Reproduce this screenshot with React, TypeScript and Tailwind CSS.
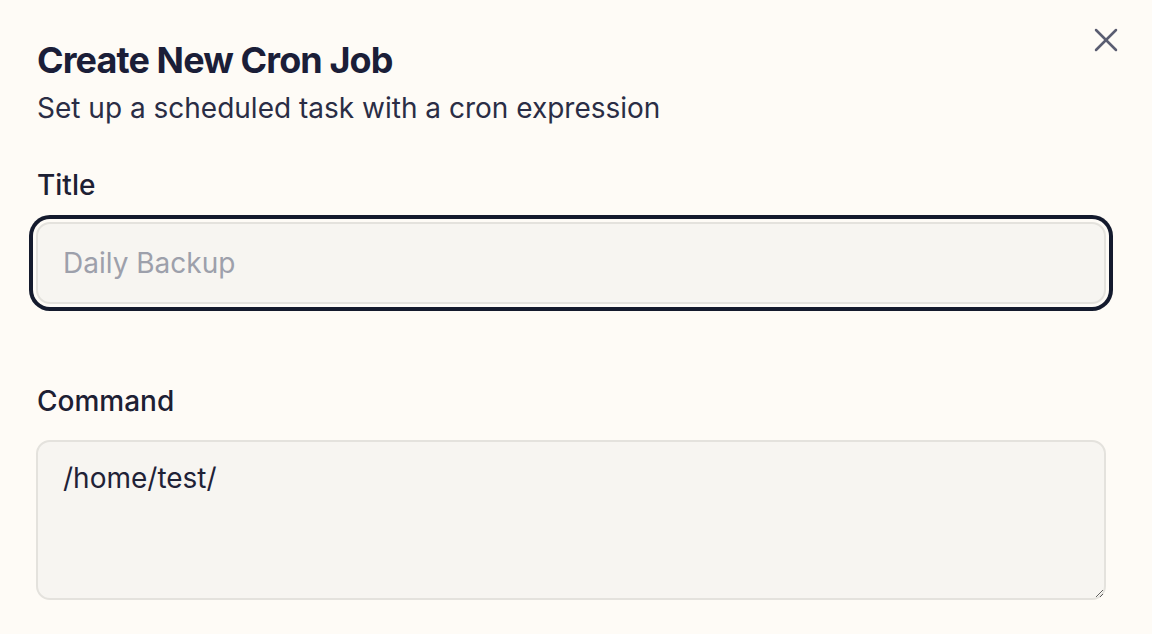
import React from "react";
import { X } from "lucide-react";

export default function App() {
  return (
    <div
      className="relative w-[1152px] h-[634px] overflow-hidden bg-[#fefbf6]"
      style={{ fontFamily: "Inter, 'Noto Sans', sans-serif" }}
    >
      <button className="absolute left-[1086px] top-[20px] text-[#5a5d71]">
        <X size={40} strokeWidth={1.5} />
      </button>
      <div className="flex flex-col pl-[36px] pr-[46px] pt-[40px]">
        <h1 className="text-[36px] leading-[40px] font-bold tracking-[-0.025em] text-[#1b1e38] pl-[1px]">
          Create New Cron Job
        </h1>
        <p className="mt-[10px] text-[28px] leading-[36px] text-[#2a2d45] pl-[1px]">
          Set up a scheduled task with a cron expression
        </p>
        <label className="mt-[41px] text-[28px] leading-[36px] font-medium text-[#1d2033] pl-[1px]">
          Title
        </label>
        <input
          placeholder="Daily Backup"
          className="mt-[19px] h-[82px] w-full rounded-[14px] border-2 border-[#e4e2dd] bg-[#f7f5f1] px-[25px] text-[28px] text-[#1f2237] placeholder:text-[#9da0ab] outline-none ring-4 ring-[#141a2d] ring-offset-[3px] ring-offset-[#fefbf6]"
        />
        <label className="mt-[79px] text-[28px] leading-[36px] font-medium text-[#1d2033] pl-[1px]">
          Command
        </label>
        <textarea
          defaultValue="/home/test/"
          className="mt-[21px] h-[160px] w-full rounded-[14px] border-2 border-[#e4e2dd] bg-[#f7f5f1] px-[25px] pt-[18px] text-[28px] leading-[36px] text-[#1f2237] outline-none"
        />
      </div>
    </div>
  );
}
